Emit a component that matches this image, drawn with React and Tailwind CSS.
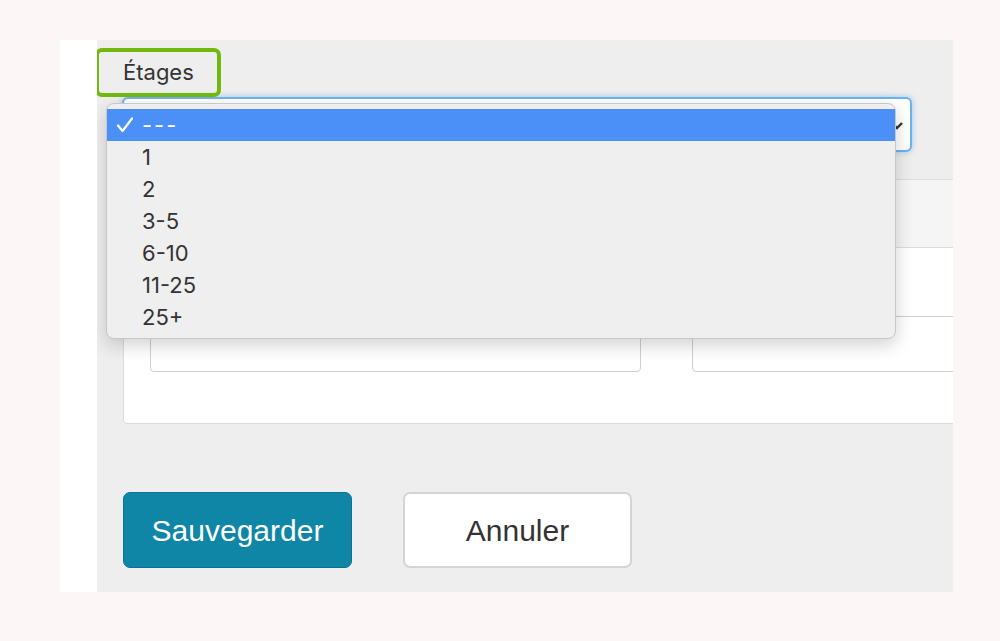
import React from "react";

const options = ["1", "2", "3-5", "6-10", "11-25", "25+"];

function Dropdown() {
  return (
    <div className="absolute left-[9px] top-[63px] w-[790px] h-[236px] rounded-[8px] bg-[#efefef] border border-[#c8c8c8] shadow-[0_6px_18px_rgba(0,0,0,0.18)] pt-[5px] font-['Inter',sans-serif] text-[22px] text-[#333]">
      <div className="flex items-center h-[32px] bg-[#4a90f6] text-white pl-[9px]">
        <svg width="18" height="18" viewBox="0 0 18 18" className="mr-[8px]">
          <path d="M2 9.5 L6.5 15 L16 2.5" fill="none" stroke="white" strokeWidth="2.2" strokeLinecap="round" strokeLinejoin="round" />
        </svg>
        <span className="tracking-[2px]">---</span>
      </div>
      {options.map((o) => (
        <div key={o} className="flex items-center h-[32px] pl-[35px]">
          {o}
        </div>
      ))}
    </div>
  );
}

export default function App() {
  return (
    <div className="w-[1000px] h-[641px] bg-[#fcf6f6] pt-[40px] pl-[60px]">
      <div className="flex w-[893px] h-[552px]">
        <div className="w-[37px] bg-white" />
        <div className="relative flex-1 bg-[#eeeeee] overflow-hidden pl-[26px]">
          {/* label */}
          <div className="h-[57px] pt-[16px] font-['Inter',sans-serif] text-[22px] text-[#333]">Étages</div>
          <div className="absolute left-[-2px] top-[8px] w-[126px] h-[49px] rounded-[7px] border-[4px] border-[#72b90f]" />

          {/* select */}
          <div className="flex items-center justify-end w-[790px] h-[55px] -ml-[1px] rounded-[6px] bg-white border-2 border-[#6fb1ef] shadow-[0_0_6px_rgba(102,175,233,0.6)] pr-[6px]">
            <svg width="14" height="14" viewBox="0 0 14 14">
              <path d="M2 5 L7 10 L12 5" fill="none" stroke="#333" strokeWidth="2.4" />
            </svg>
          </div>

          {/* card */}
          <div className="mt-[27px] w-[860px] h-[245px] rounded-[4px] bg-white border border-[#dcdcdc] flex flex-col">
            <div className="h-[68px] bg-[#f5f5f5] border-b border-[#dddddd]" />
            <div className="flex gap-[51px] pl-[26px] mt-[68px]">
              <div className="shrink-0 w-[491px] h-[56px] rounded-[4px] border border-[#cfcfcf]" />
              <div className="shrink-0 w-[300px] h-[56px] rounded-[4px] border border-[#cfcfcf]" />
            </div>
          </div>

          {/* buttons */}
          <div className="flex gap-[51px] mt-[68px] font-['Liberation_Sans',Arial,sans-serif] text-[30px]">
            <button className="w-[229px] h-[76px] rounded-[7px] bg-[#0f86a6] border border-[#0b7391] text-white">
              Sauvegarder
            </button>
            <button className="w-[229px] h-[76px] rounded-[7px] bg-white border-2 border-[#d4d4d4] text-[#333]">
              Annuler
            </button>
          </div>

          <Dropdown />
        </div>
      </div>
    </div>
  );
}
